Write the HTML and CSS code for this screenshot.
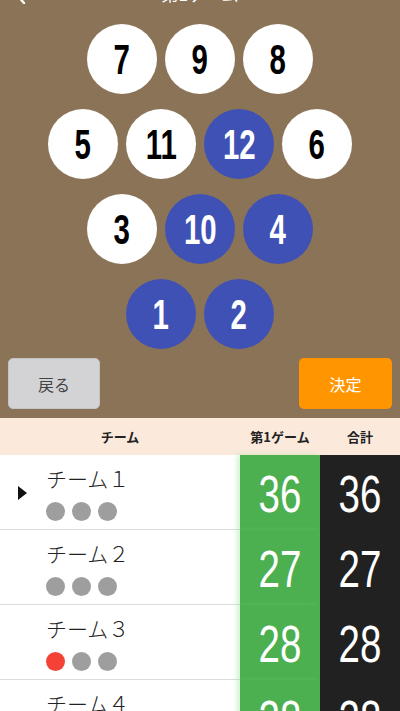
FILE: index.html
```html
<!DOCTYPE html>
<html lang="ja">
<head>
<meta charset="utf-8">
<link rel="stylesheet" href="styles.css">
</head>
<body>
<div class="app">
  <section class="board">
    <div class="titlebar">
      <span class="back"><svg width="12" height="20" viewBox="0 0 12 20"><path d="M10 1 L2 10 L10 19" fill="none" stroke="#fff" stroke-width="2.4" stroke-linecap="round" stroke-linejoin="round"/></svg></span>
      <span class="title">第1ゲーム</span>
      <span class="spacer"></span>
    </div>
    <div class="pins">
      <div class="pin-row">
        <div class="pin up"><span>7</span></div>
        <div class="pin up"><span>9</span></div>
        <div class="pin up"><span>8</span></div>
      </div>
      <div class="pin-row">
        <div class="pin up"><span>5</span></div>
        <div class="pin up"><span>11</span></div>
        <div class="pin down"><span>12</span></div>
        <div class="pin up"><span>6</span></div>
      </div>
      <div class="pin-row">
        <div class="pin up"><span>3</span></div>
        <div class="pin down"><span>10</span></div>
        <div class="pin down"><span>4</span></div>
      </div>
      <div class="pin-row">
        <div class="pin down"><span>1</span></div>
        <div class="pin down"><span>2</span></div>
      </div>
    </div>
    <div class="actions">
      <button class="btn btn-back">戻る</button>
      <button class="btn btn-ok">決定</button>
    </div>
  </section>

  <section class="table">
    <div class="thead">
      <div class="c-team">チーム</div>
      <div class="c-game">第1ゲーム</div>
      <div class="c-total">合計</div>
    </div>

    <div class="trow">
      <div class="c-team">
        <div class="marker"><span class="tri"></span></div>
        <div class="info">
          <div class="name">チーム１</div>
          <div class="dots"><span class="dot"></span><span class="dot"></span><span class="dot"></span></div>
        </div>
      </div>
      <div class="c-game score"><span>36</span></div>
      <div class="c-total score"><span>36</span></div>
    </div>

    <div class="trow">
      <div class="c-team">
        <div class="marker"></div>
        <div class="info">
          <div class="name">チーム２</div>
          <div class="dots"><span class="dot"></span><span class="dot"></span><span class="dot"></span></div>
        </div>
      </div>
      <div class="c-game score"><span>27</span></div>
      <div class="c-total score"><span>27</span></div>
    </div>

    <div class="trow">
      <div class="c-team">
        <div class="marker"></div>
        <div class="info">
          <div class="name">チーム３</div>
          <div class="dots"><span class="dot red"></span><span class="dot"></span><span class="dot"></span></div>
        </div>
      </div>
      <div class="c-game score"><span>28</span></div>
      <div class="c-total score"><span>28</span></div>
    </div>

    <div class="trow">
      <div class="c-team">
        <div class="marker"></div>
        <div class="info">
          <div class="name">チーム４</div>
          <div class="dots"><span class="dot"></span><span class="dot"></span><span class="dot"></span></div>
        </div>
      </div>
      <div class="c-game score"><span>28</span></div>
      <div class="c-total score"><span>28</span></div>
    </div>
  </section>
</div>
</body>
</html>
```

FILE: styles.css
```css
* { box-sizing: border-box; }
html, body { margin: 0; padding: 0; }
body {
  width: 400px;
  height: 711px;
  overflow: hidden;
  font-family: "Noto Sans CJK JP", "Noto Sans", sans-serif;
  background: #ffffff;
  color: #222;
}
.app { display: flex; flex-direction: column; }

.board {
  background: #8b7357;
  display: flex;
  flex-direction: column;
  padding-bottom: 9px;
}
.titlebar {
  display: grid;
  grid-template-columns: 40px 1fr 40px;
  align-items: center;
  height: 24px;
  margin-top: -18px;
  color: #fff;
}
.back { display: flex; justify-content: center; }
.title { text-align: center; font-size: 17px; line-height: 24px; }

.pins {
  display: flex;
  flex-direction: column;
  gap: 15px;
  padding-top: 18px;
}
.pin-row {
  display: flex;
  justify-content: center;
  gap: 8px;
}
.pin {
  width: 70px;
  height: 70px;
  border-radius: 50%;
  display: flex;
  align-items: center;
  justify-content: center;
  font-family: "Liberation Sans", "DejaVu Sans", sans-serif;
  font-weight: bold;
  font-size: 42px;
}
.pin span { display: inline-block; transform: scaleX(0.7); line-height: 1; margin-top: 2px; }
.pin.up { background: #ffffff; color: #000; }
.pin.down { background: #3f51b5; color: #fff; }

.actions {
  display: flex;
  justify-content: space-between;
  padding: 9px 8px 0 8px;
}
.btn {
  height: 51px;
  border-radius: 5px;
  font-family: "Noto Sans CJK JP", sans-serif;
  font-size: 16px;
  border: none;
  padding: 0;
}
.btn-back {
  width: 92px;
  background: #d3d3d5;
  color: #444;
  border: 1px solid #c4c4c6;
}
.btn-ok {
  width: 93px;
  background: #ff9500;
  color: #fff;
}

.thead {
  display: grid;
  grid-template-columns: 240px 80px 80px;
  height: 37px;
  align-items: center;
  background: #fbe9dc;
  font-size: 13px;
  font-weight: bold;
  text-align: center;
  color: #222;
}
.trow {
  display: grid;
  grid-template-columns: 240px 80px 80px;
  height: 75px;
}
.trow .c-team {
  display: flex;
  border-bottom: 1px solid #dcdcdc;
}
.marker {
  width: 46px;
  display: flex;
  align-items: center;
  padding-left: 18px;
}
.tri {
  width: 0;
  height: 0;
  border-top: 7px solid transparent;
  border-bottom: 7px solid transparent;
  border-left: 9px solid #111;
  margin-top: 1px;
}
.info { padding-top: 9px; }
.name {
  font-size: 21px;
  line-height: 28px;
  font-weight: 300;
  color: #222;
}
.dots { display: flex; gap: 7px; margin-top: 10px; }
.dot {
  width: 19px;
  height: 19px;
  border-radius: 50%;
  background: #9e9e9e;
}
.dot.red { background: #f44336; }

.score {
  display: flex;
  align-items: center;
  justify-content: center;
  color: #fff;
  font-family: "Liberation Sans", "DejaVu Sans", sans-serif;
  font-size: 52px;
}
.score span { display: inline-block; transform: scaleX(0.74); line-height: 1; margin-top: 2px; }
.c-game.score {
  background: #4caf50;
  box-shadow: -3px 0 5px rgba(120, 220, 120, 0.35);
}
.c-total.score { background: #212121; }
```
